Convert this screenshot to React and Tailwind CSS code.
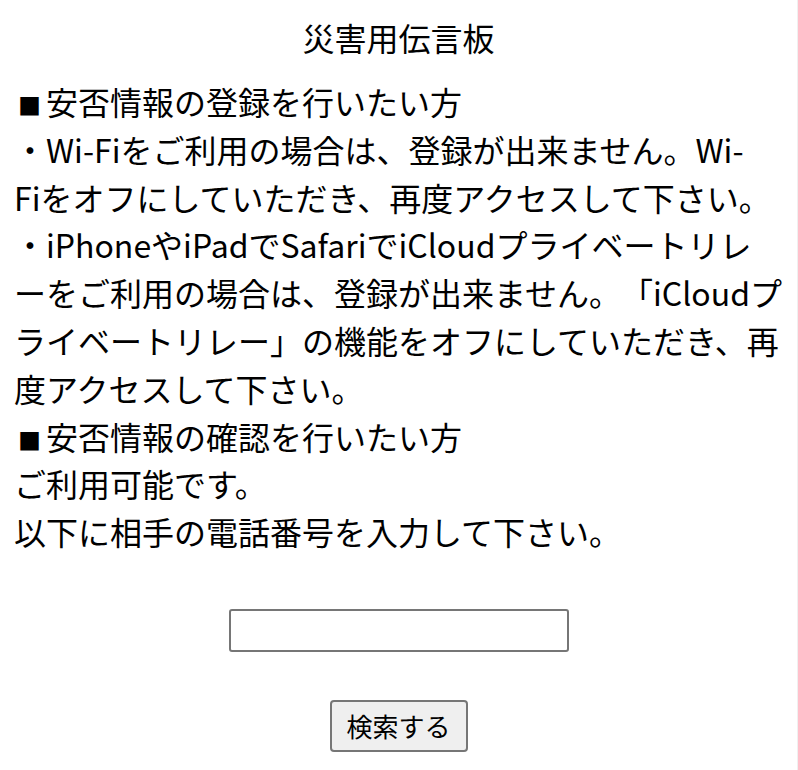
function Sq() {
  return (
    <span className="inline-block w-[32px] pl-[4px] text-[23px] align-baseline leading-none">■</span>
  );
}

export default function App() {
  return (
    <div
      className="w-[798px] min-h-[770px] bg-white text-black border-r border-[#f0f0f0]"
      style={{ fontFamily: '"Noto Sans CJK JP", "Noto Sans", sans-serif' }}
    >
      <h1 className="pt-[14px] text-center text-[32px] leading-[47px] font-normal">
        災害用伝言板
      </h1>
      <div className="mt-[17px] pl-[14px] pr-[2px] text-[32px] leading-[47.8px] whitespace-nowrap [text-spacing-trim:space-all]">
        <p>
          <Sq />
          安否情報の登録を行いたい方
        </p>
        <p>
          ・Wi-Fiをご利用の場合は、登録が出来ません。Wi-
          <br />
          Fiをオフにしていただき、再度アクセスして下さい。
        </p>
        <p>
          ・iPhoneやiPadでSafariでiCloudプライベートリレ
          <br />
          ーをご利用の場合は、登録が出来ません。「iCloudプ
          <br />
          ライベートリレー」の機能をオフにしていただき、再
          <br />
          度アクセスして下さい。
        </p>
        <p>
          <Sq />
          安否情報の確認を行いたい方
        </p>
        <p>ご利用可能です。</p>
        <p>以下に相手の電話番号を入力して下さい。</p>
      </div>
      <div className="flex flex-col items-center">
        <input
          type="text"
          className="mt-[53px] w-[340px] h-[43px] border-2 border-[#767676] rounded-[3px] bg-white px-1 text-[26px] outline-none"
        />
        <button
          type="button"
          className="mt-[48px] w-[138px] h-[52px] border-2 border-[#767676] rounded-[4px] bg-[#efefef] text-[26px] leading-none text-black"
        >
          検索する
        </button>
      </div>
    </div>
  );
}
